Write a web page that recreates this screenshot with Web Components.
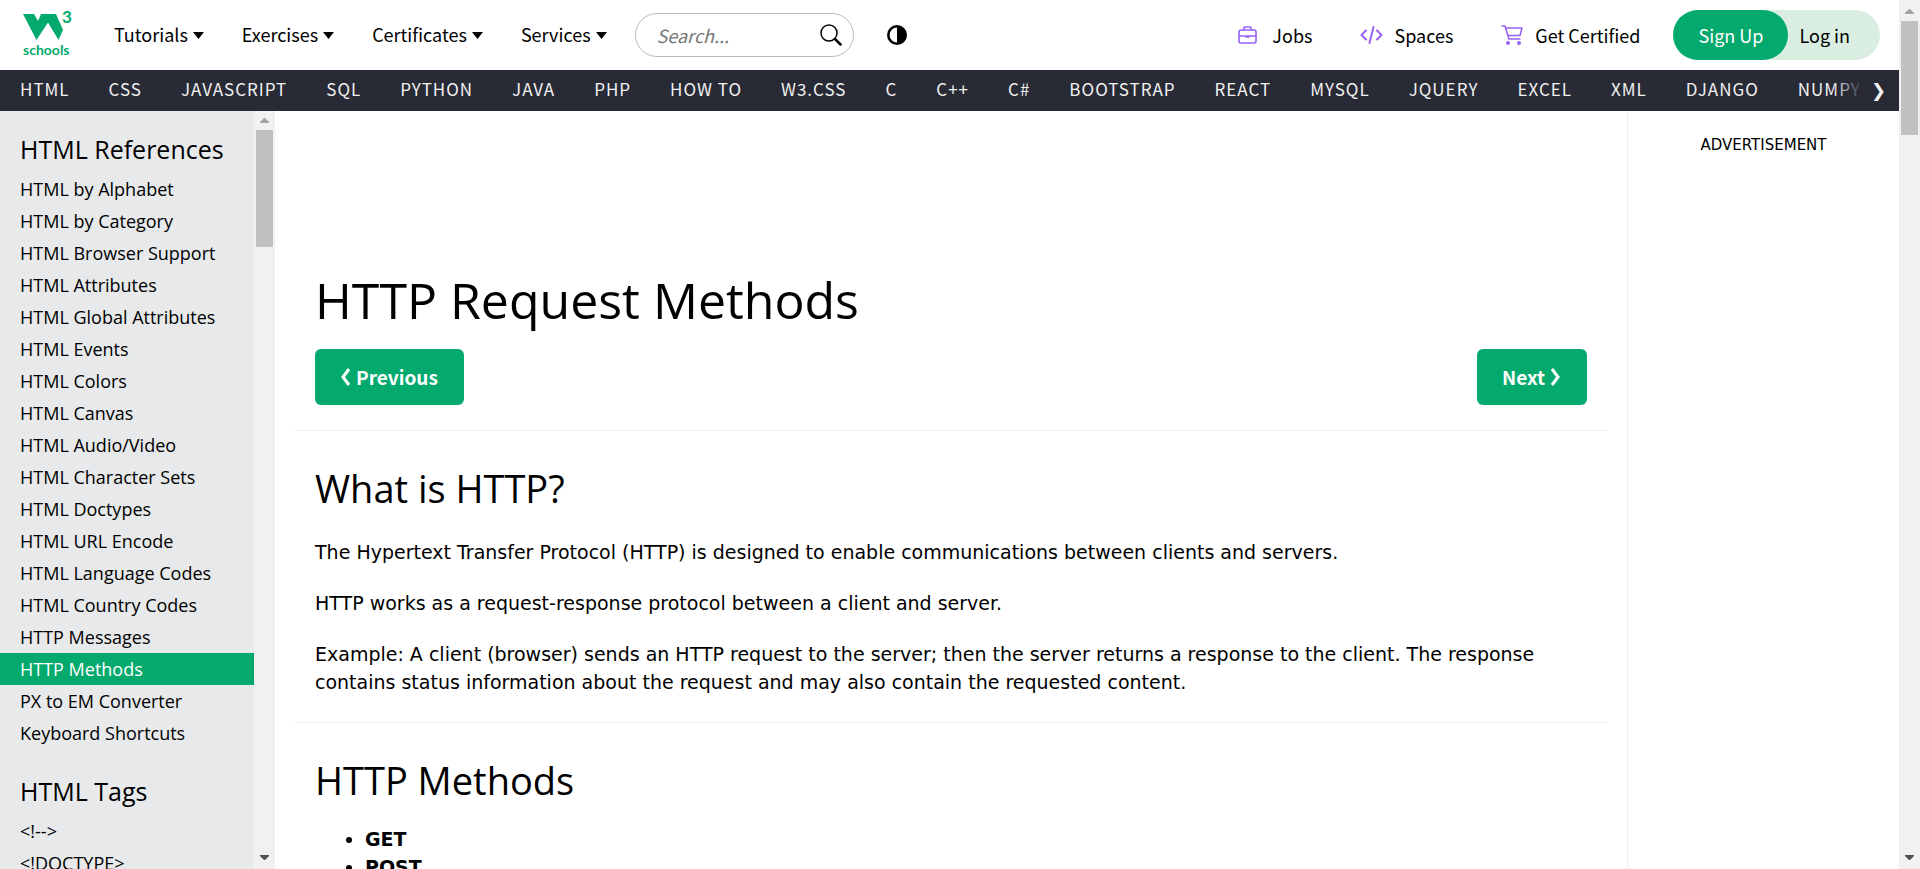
<!DOCTYPE html>
<html lang="en">
<head>
<meta charset="utf-8">
<title>HTTP Methods GET vs POST</title>
<style>
  html, body { margin: 0; height: 100%; }
  body {
    --green: #04aa6d;
    --dark: #282a35;
    --ui: "Noto Sans CJK SC", sans-serif;
    --heading: "Open Sans", sans-serif;
    --text: "DejaVu Sans", sans-serif;
    background: #fff; color: #000; overflow: hidden;
  }
</style>
</head>
<body>
<w3-shell>
  <w3-header slot="header"></w3-header>
  <w3-topics slot="topics"></w3-topics>
  <w3-sidebar slot="side">
    <w3-menu heading="HTML References" items="HTML by Alphabet|HTML by Category|HTML Browser Support|HTML Attributes|HTML Global Attributes|HTML Events|HTML Colors|HTML Canvas|HTML Audio/Video|HTML Character Sets|HTML Doctypes|HTML URL Encode|HTML Language Codes|HTML Country Codes|HTTP Messages|HTTP Methods|PX to EM Converter|Keyboard Shortcuts" active="HTTP Methods"></w3-menu>
    <w3-menu heading="HTML Tags" items="&lt;!--&gt;|&lt;!DOCTYPE&gt;"></w3-menu>
  </w3-sidebar>
  <w3-article slot="main">
    <span slot="title">HTTP Request Methods</span>
    <w3-section heading="What is HTTP?">
      <w3-para>The Hypertext Transfer Protocol (HTTP) is designed to enable communications between clients and servers.</w3-para>
      <w3-para>HTTP works as a request-response protocol between a client and server.</w3-para>
      <w3-para>Example: A client (browser) sends an HTTP request to the server; then the server returns a response to the client. The response contains status information about the request and may also contain the requested content.</w3-para>
    </w3-section>
    <w3-section heading="HTTP Methods">
      <w3-list items="GET|POST"></w3-list>
    </w3-section>
  </w3-article>
  <w3-ad slot="ad">ADVERTISEMENT</w3-ad>
</w3-shell>

<script>
const define = (name, render) => customElements.define(name, class extends HTMLElement {
  constructor() { super(); this.attachShadow({ mode: 'open' }); }
  connectedCallback() { this.shadowRoot.innerHTML = render(this); }
});
const esc = s => s.replace(/&/g, '&amp;').replace(/</g, '&lt;').replace(/>/g, '&gt;');
const split = (el, name) => (el.getAttribute(name) || '').split('|').map(esc);

define('w3-scrollbar', el => `
  <style>
    :host { display: flex; flex-direction: column; width: 21px; background: #f1f1f1; box-sizing: border-box; }
    svg { display: block; width: 21px; height: 21px; flex: none; }
    .track { flex: 1; min-height: 0; padding: 0 2px; }
    .thumb { height: ${el.getAttribute('thumb')}; background: #c1c1c1; }
  </style>
  <svg viewBox="0 0 21 21"><path d="M6 14h9v-1l-4-4h-1l-4 4z" fill="#a3a3a3"/></svg>
  <div class="track"><div class="thumb"></div></div>
  <svg viewBox="0 0 21 21"><path d="M6 7h9v1l-4 4h-1l-4-4z" fill="#505050"/></svg>`);

define('w3-shell', () => `
  <style>
    :host { display: flex; height: 100vh; }
    .page { flex: 1; min-width: 0; display: flex; flex-direction: column; }
    .body { flex: 1; min-height: 0; display: flex; overflow: hidden; }
    ::slotted([slot=main]) { flex: 1; min-width: 0; }
  </style>
  <div class="page">
    <slot name="header"></slot>
    <slot name="topics"></slot>
    <div class="body"><slot name="side"></slot><slot name="main"></slot><slot name="ad"></slot></div>
  </div>
  <w3-scrollbar thumb="114px"></w3-scrollbar>`);

define('w3-logo', () => `
  <style>
    :host { display: block; }
    a, svg { display: block; }
    svg { overflow: visible; }
    text { font-family: Lato, sans-serif; font-weight: 700; fill: var(--green); }
  </style>
  <a href="#" aria-label="W3Schools Home">
    <svg width="50" height="50" viewBox="0 0 50 50">
      <path d="M0 4H11L15 11L18 4H33L40 20L35.500 30L25 12.500L13.500 30Z" fill="var(--green)"/>
      <text x="39" y="13" font-size="17">3</text>
      <text x="0" y="45" font-size="14">schools</text>
    </svg>
  </a>`);

define('w3-dropdown', () => `
  <style>
    :host { display: block; }
    a { display: flex; align-items: center; gap: 5px; color: #000; text-decoration: none; font: 18px/30px var(--ui); }
    svg { display: block; margin-top: 2px; }
  </style>
  <a href="#"><slot></slot><svg width="11" height="7" viewBox="0 0 11 7"><path d="M0 0H11L5.500 7Z"/></svg></a>`);

define('w3-search', () => `
  <style>
    :host { display: block; }
    form { display: flex; align-items: center; width: 219px; height: 44px; box-sizing: border-box; padding: 0 11px 0 21px; border: 1px solid #bbb; border-radius: 22px; }
    input { flex: 1; min-width: 0; padding: 0; border: 0; outline: 0; background: none; font: italic 18px/30px var(--ui); }
    input::placeholder { color: #757575; opacity: 1; }
    button { padding: 0; border: 0; background: none; }
    svg { display: block; }
  </style>
  <form onsubmit="return false">
    <input type="text" placeholder="Search..." aria-label="Search">
    <button type="submit" aria-label="Search"><svg width="22" height="22" viewBox="0 0 22 22" fill="none" stroke="#000"><circle cx="9" cy="9" r="8" stroke-width="1.500"/><path d="M15 15L20.500 20.500" stroke-width="2.500" stroke-linecap="round"/></svg></button>
  </form>`);

const icons = {
  jobs: `<svg width="19" height="18" viewBox="0 0 19 18"><path d="M6 4V2Q6 1 7 1H12Q13 1 13 2V4M3 4H16Q18 4 18 6V15Q18 17 16 17H3Q1 17 1 15V6Q1 4 3 4ZM1 10H18M8 11H11"/></svg>`,
  spaces: `<svg width="23" height="18" viewBox="0 0 23 18"><path d="M6 4.500L1.500 9L6 13.500M17 4.500L21.500 9L17 13.500M13.500 1L9.500 17" stroke-width="2"/></svg>`,
  cart: `<svg width="23" height="20" viewBox="0 0 23 20"><path d="M1 1H4L8 14H19M5 3H21L19 10.500H7.500"/><circle cx="7" cy="18" r="1.200" fill="#9763f6"/><circle cx="18" cy="18" r="1.200" fill="#9763f6"/></svg>`
};
define('w3-iconlink', el => `
  <style>
    :host { display: block; }
    a { display: flex; align-items: center; gap: ${el.getAttribute('icon') === 'jobs' ? 15 : 11}px; color: #000; text-decoration: none; font: 18px/30px var(--ui); white-space: nowrap; }
    svg { display: block; fill: none; stroke: #9763f6; stroke-width: 1.600; stroke-linecap: round; stroke-linejoin: round; }
  </style>
  <a href="#">${icons[el.getAttribute('icon')]}<slot></slot></a>`);

define('w3-account', () => `
  <style>
    :host { display: flex; height: 50px; border-radius: 25px; background: #d9eee1; font: 18px/50px var(--ui); white-space: nowrap; }
    a { text-decoration: none; color: #000; }
    .up { padding: 0 25px; border-radius: 25px; background: var(--green); color: #fff; }
    .in { padding: 0 30px 0 11px; }
  </style>
  <a class="up" href="#">Sign Up</a><a class="in" href="#">Log in</a>`);

define('w3-header', () => `
  <style>
    :host { display: flex; align-items: center; height: 70px; flex: none; padding: 0 19px 0 23px; box-sizing: border-box; }
    nav { display: flex; align-items: center; gap: 38px; margin-left: 41px; padding-bottom: 2px; }
    w3-search { margin-left: 28px; }
    .contrast { margin-left: 33px; padding: 0; border: 0; background: none; }
    .contrast svg { display: block; }
    .right { display: flex; align-items: center; margin-left: auto; gap: 48px; }
    w3-account { margin-left: 33px; }
  </style>
  <w3-logo></w3-logo>
  <nav><w3-dropdown>Tutorials</w3-dropdown><w3-dropdown>Exercises</w3-dropdown><w3-dropdown>Certificates</w3-dropdown><w3-dropdown>Services</w3-dropdown></nav>
  <w3-search></w3-search>
  <button class="contrast" aria-label="Toggle dark mode"><svg width="20" height="20" viewBox="0 0 20 20"><circle cx="10" cy="10" r="8.700" fill="#fff" stroke="#000" stroke-width="2.600"/><path d="M10 1A9 9 0 0 1 10 19Z"/></svg></button>
  <div class="right"><w3-iconlink icon="jobs">Jobs</w3-iconlink><w3-iconlink icon="spaces">Spaces</w3-iconlink><w3-iconlink icon="cart">Get Certified</w3-iconlink></div>
  <w3-account></w3-account>`);

define('w3-topics', () => `
  <style>
    :host { display: block; position: relative; height: 41px; flex: none; overflow: hidden; background: var(--dark); }
    nav { display: flex; }
    a { padding: 0 19px 0 20px; color: #f1f1f1; text-decoration: none; white-space: nowrap; font: 17px/38px var(--ui); letter-spacing: 1px; }
    button { position: absolute; right: 0; top: 0; height: 41px; width: 66px; padding: 0 13px 0 0; border: 0; text-align: right; color: #f1f1f1; font: 18px/36px var(--text); background: linear-gradient(90deg, transparent, var(--dark) 30px); }
  </style>
  <nav>${'HTML|CSS|JAVASCRIPT|SQL|PYTHON|JAVA|PHP|HOW TO|W3.CSS|C|C++|C#|BOOTSTRAP|REACT|MYSQL|JQUERY|EXCEL|XML|DJANGO|NUMPY'.split('|').map(t => `<a href="#">${t}</a>`).join('')}</nav>
  <button aria-label="Scroll right">❯</button>`);

define('w3-menu', el => `
  <style>
    :host { display: block; margin-bottom: 23px; font-family: var(--heading); }
    h2 { margin: 0 0 5px; padding-left: 20px; font-size: 25px; line-height: 38px; font-weight: 400; }
    a { display: block; padding-left: 20px; font-size: 18px; line-height: 32px; color: #000; text-decoration: none; white-space: nowrap; }
    a.active { background: var(--green); color: #fff; }
  </style>
  <h2>${esc(el.getAttribute('heading'))}</h2>
  ${split(el, 'items').map(t => `<a href="#"${t === el.getAttribute('active') ? ' class="active" aria-current="page"' : ''}>${t}</a>`).join('')}`);

define('w3-sidebar', () => `
  <style>
    :host { display: flex; width: 275px; flex: none; overflow: hidden; background: #e7e9eb; }
    nav { flex: 1; padding-top: 19px; }
    w3-scrollbar { margin-top: -2px; }
  </style>
  <nav><slot></slot></nav>
  <w3-scrollbar thumb="117px"></w3-scrollbar>`);

define('w3-pager', el => `
  <style>
    :host { display: block; }
    a { display: flex; align-items: center; gap: 5px; height: 56px; padding: 0 26px 0 25px; border-radius: 6px; background: var(--green); color: #fff; text-decoration: none; font: 700 19px/56px var(--ui); }
    svg { display: block; fill: none; stroke: #fff; stroke-width: 3; }
  </style>
  <a href="#">${el.hasAttribute('back') ? '<svg width="11" height="18" viewBox="0 0 11 18"><path d="M9 1L3 9L9 17"/></svg>' : ''}<slot></slot>${el.hasAttribute('back') ? '' : '<svg width="11" height="18" viewBox="0 0 11 18"><path d="M2 1L8 9L2 17"/></svg>'}</a>`);

define('w3-article', () => `
  <style>
    :host { display: block; overflow: hidden; padding: 150px 20px 0; }
    h1 { margin: 0; padding: 0 20px; font: 400 50px/78px var(--heading); }
    .pager { display: flex; justify-content: space-between; padding: 10px 20px 25px; }
  </style>
  <h1><slot name="title"></slot></h1>
  <div class="pager"><w3-pager back>Previous</w3-pager><w3-pager>Next</w3-pager></div>
  <slot></slot>`);

define('w3-section', el => `
  <style>
    :host { display: block; padding: 28px 20px 26px; border-top: 1px solid #eee; }
    h2 { margin: 0 0 16px; font: 400 38px/58px var(--heading); }
  </style>
  <h2>${esc(el.getAttribute('heading'))}</h2>
  <slot></slot>`);

define('w3-para', () => `
  <style>:host { display: block; margin-bottom: 23px; font: 19px/28px var(--text); } p { margin: 0; } :host(:first-child) { margin-top: 21px; } :host(:last-child) { margin-bottom: 0; }</style>
  <p><slot></slot></p>`);

define('w3-list', el => `
  <style>:host { display: block; } ul { margin: 0; padding-left: 50px; font: 19px/28px var(--text); } li { font-weight: 700; }</style>
  <ul>${split(el, 'items').map(t => `<li>${t}</li>`).join('')}</ul>`);

define('w3-ad', () => `
  <style>
    :host { display: block; width: 271px; flex: none; margin-top: 2px; padding-top: 20px; border-left: 1px solid #eee; text-align: center; font: 15px/24px var(--text); }
  </style>
  <slot></slot>`);
</script>
</body>
</html>
